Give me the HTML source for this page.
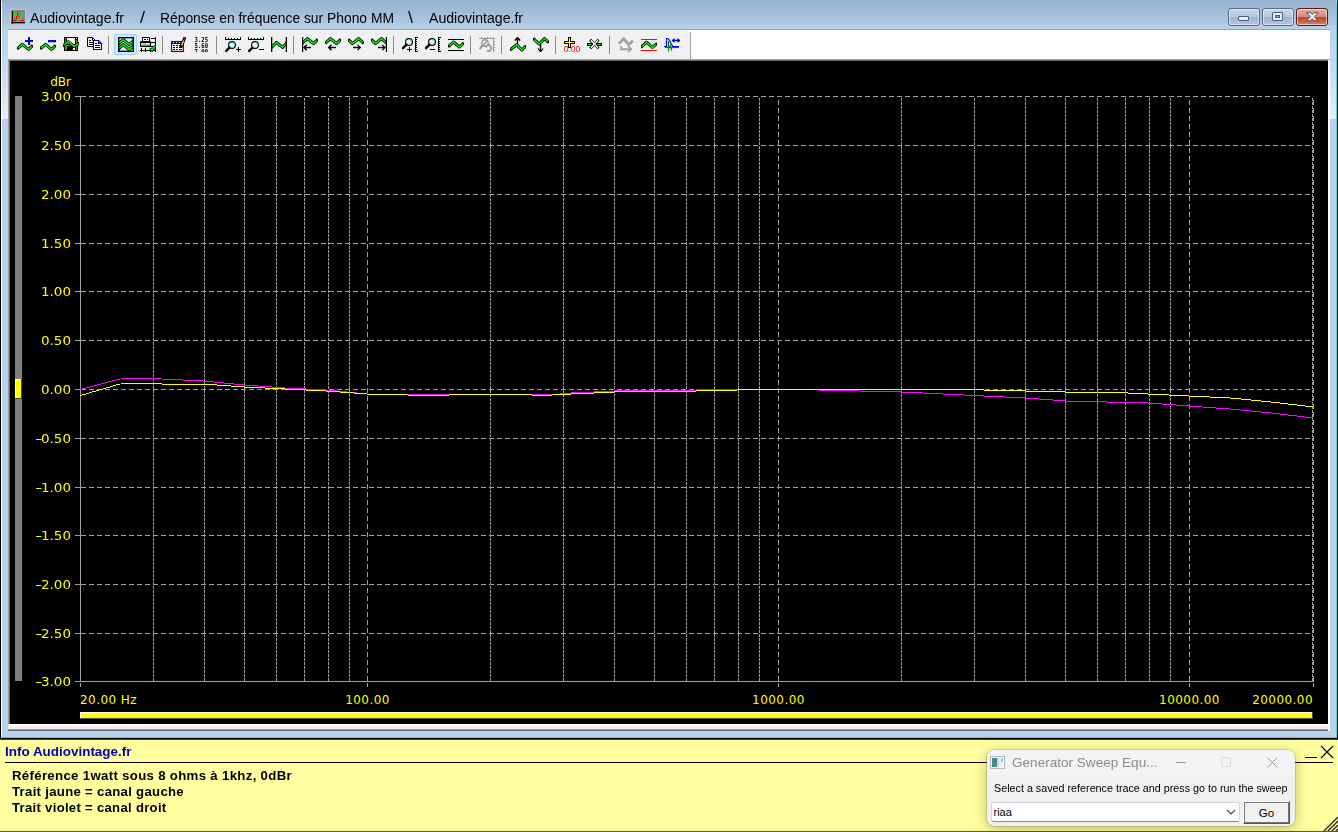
<!DOCTYPE html><html lang="fr"><head><meta charset="utf-8"><title>Audiovintage.fr / Réponse en fréquence sur Phono MM \ Audiovintage.fr</title><style>
*{box-sizing:border-box;margin:0;padding:0}
html,body{width:1338px;height:832px;overflow:hidden;background:#ffffa0;font-family:"Liberation Sans",sans-serif}
.a{position:absolute}
#frame{left:0;top:0;width:1338px;height:739px;background:#b9d1ea}
#tbar{left:2px;top:0;width:1334px;height:29px;background:linear-gradient(#98b3d0,#a3bcd8 45%,#b9d1ea)}
.tt{top:8px;height:20px;line-height:20px;font-size:14px;color:#000;white-space:pre;transform-origin:0 50%}
.cb{top:8px;width:32px;height:18px;border:1px solid #5a6a85;border-radius:3px;box-shadow:inset 0 0 0 1px rgba(255,255,255,.55)}
.yl{font-family:"DejaVu Sans","Liberation Sans",sans-serif;font-size:12px;color:#ffff00;white-space:pre;line-height:14px;height:14px}
#info{left:0;top:740px;width:1338px;height:92px;background:#ffffa0}
.it{left:12px;font-weight:bold;font-size:13px;color:#000;white-space:pre;line-height:16px;height:16px;letter-spacing:.3px;transform-origin:0 50%}
</style></head><body>
<div id="frame" class="a"></div>
<div id="tbar" class="a"></div>
<div class="a" style="left:0;top:0;width:1px;height:739px;background:#000"></div>
<div class="a" style="left:1px;top:2px;width:1px;height:735px;background:#fff"></div>
<div class="a" style="left:1336px;top:2px;width:1px;height:736px;background:#3fd4ee"></div>
<div class="a" style="left:1337px;top:0;width:1px;height:739px;background:#000"></div>
<div class="a" style="left:1px;top:737px;width:1336px;height:1px;background:#3fd4ee"></div>
<div class="a" style="left:0;top:738px;width:1338px;height:1px;background:#000"></div>
<div class="a" style="left:0;top:739px;width:1338px;height:1px;background:#45452c"></div>
<div class="a" style="left:2px;top:30px;width:6px;height:89px;background:linear-gradient(rgba(225,237,249,0),rgba(225,237,249,.35) 40%,rgba(228,239,250,1))"></div>
<div class="a" style="left:1330px;top:30px;width:6px;height:89px;background:linear-gradient(rgba(225,237,249,0),rgba(225,237,249,.35) 40%,rgba(228,239,250,1))"></div>
<svg class="a" style="left:10px;top:9px" width="16" height="16" viewBox="0 0 16 16" shape-rendering="crispEdges"><rect x="0" y="0" width="16" height="16" fill="#c8c6c2"/><rect x="1" y="1" width="14" height="14" fill="#848484"/><rect x="3" y="11" width="3" height="1" fill="#f00"/><rect x="10" y="11" width="4" height="1" fill="#f00"/><rect x="7" y="3" width="1" height="4" fill="#f00"/><rect x="6" y="7" width="1" height="4" fill="#f00"/><rect x="8" y="7" width="1" height="2" fill="#f00"/><rect x="3" y="7" width="1" height="2" fill="#0f0"/><rect x="4" y="5" width="1" height="2" fill="#0f0"/><rect x="5" y="4" width="1" height="1" fill="#0f0"/><rect x="6" y="5" width="1" height="2" fill="#0f0"/><rect x="7" y="7" width="1" height="2" fill="#0f0"/><rect x="8" y="9" width="1" height="2" fill="#0f0"/><rect x="9" y="11" width="1" height="1" fill="#0f0"/><rect x="10" y="9" width="1" height="2" fill="#0f0"/><rect x="11" y="7" width="1" height="2" fill="#0f0"/><rect x="12" y="5" width="1" height="2" fill="#0f0"/><rect x="13" y="4" width="1" height="1" fill="#0f0"/><rect x="2" y="2" width="1" height="13" fill="#000"/><rect x="1" y="13" width="14" height="1" fill="#000"/></svg>
<div class="a tt" id="tt0" style="left:30px;transform:scaleX(1.0064)">Audiovintage.fr</div>
<div class="a tt" id="tt1" style="left:139.5px;font-size:16px;transform:scaleX(1.1228)">/</div>
<div class="a tt" id="tt2" style="left:159.5px;transform:scaleX(0.9890)">Réponse en fréquence sur Phono MM</div>
<div class="a tt" id="tt3" style="left:407.5px;font-size:16px;transform:scaleX(1.1228)">\</div>
<div class="a tt" id="tt4" style="left:429px;transform:scaleX(1.0064)">Audiovintage.fr</div>
<div class="a cb" style="left:1228px;background:linear-gradient(#c3d6ec 0,#b4cae4 48%,#9bb5d4 52%,#b1c8e3 100%)"><div class="a" style="left:9px;top:7px;width:11px;height:5px;background:#eee;border:1px solid #4c5a74;border-radius:1px"></div></div>
<div class="a cb" style="left:1262px;background:linear-gradient(#c3d6ec 0,#b4cae4 48%,#9bb5d4 52%,#b1c8e3 100%)"><div class="a" style="left:9px;top:3px;width:11px;height:9px;background:#eee;border:1px solid #4c5a74;border-radius:1px"><div class="a" style="left:2px;top:2px;width:5px;height:3px;border:1px solid #4c5a74;background:#8fa8cb"></div></div></div>
<div class="a cb" style="left:1296px;border-color:#5b1a20;background:linear-gradient(#e8a99d 0,#d98c7c 48%,#c2452a 52%,#d8806a 100%)"><svg class="a" style="left:9px;top:2px" width="13" height="12" viewBox="0 0 13 12"><path d="M0.8 1.6 L4.6 1.6 L6.3 3.7 L8 1.6 L11.8 1.6 L8.3 5.7 L11.8 9.8 L8 9.8 L6.3 7.7 L4.6 9.8 L0.8 9.8 L4.3 5.7 Z" fill="#f4f4f4" stroke="#55575f" stroke-width="1" stroke-linejoin="round"/></svg></div>
<div class="a" style="left:8px;top:29px;width:1322px;height:1px;background:#a0a0a0"></div>
<div class="a" style="left:8px;top:30px;width:1322px;height:29px;background:#fff"></div>
<div class="a" style="left:8px;top:31px;width:682px;height:28px;background:#f0f0f0"></div>
<div class="a" style="left:690px;top:32px;width:1px;height:27px;background:#a0a0a0"></div>
<svg class="a" style="left:17px;top:37px" width="16" height="16" viewBox="0 0 16 16"><polyline points="1.2,11 5.5,7.4 11.5,12.4 14.8,9.4" fill="none" stroke="#000" stroke-width="3.0" stroke-linecap="square" stroke-linejoin="round"/><polyline points="1.2,11 5.5,7.4 11.5,12.4 14.8,9.4" fill="none" stroke="#00ff00" stroke-width="1.4" stroke-linecap="butt" stroke-linejoin="miter"/><rect x="11" y="0" width="2" height="8" fill="#00f"/><rect x="8" y="3" width="8" height="2" fill="#00f"/><rect x="11" y="7" width="2" height="1" fill="#000"/><rect x="15" y="3" width="1" height="2" fill="#000"/></svg>
<svg class="a" style="left:40px;top:37px" width="16" height="16" viewBox="0 0 16 16"><polyline points="1.2,11 5.5,7.4 11.5,12.4 14.8,9.4" fill="none" stroke="#000" stroke-width="3.0" stroke-linecap="square" stroke-linejoin="round"/><polyline points="1.2,11 5.5,7.4 11.5,12.4 14.8,9.4" fill="none" stroke="#00ff00" stroke-width="1.4" stroke-linecap="butt" stroke-linejoin="miter"/><rect x="8" y="3" width="8" height="2" fill="#00f"/><rect x="15" y="3" width="1" height="2" fill="#000"/><rect x="8" y="4.6" width="8" height="0.6" fill="#000"/></svg>
<svg class="a" style="left:63px;top:37px" width="16" height="16" viewBox="0 0 16 16"><rect x="1" y="0" width="14" height="14" fill="#000"/><rect x="2" y="1" width="1" height="4" fill="#808000"/><rect x="4" y="1" width="8" height="6" fill="#fff"/><rect x="13" y="1" width="1" height="1" fill="#fff"/><rect x="13" y="3" width="1" height="10" fill="#808000"/><rect x="2" y="8" width="2" height="5" fill="#808000"/><rect x="2" y="8" width="6" height="1" fill="#808000"/><rect x="10" y="11" width="2" height="2" fill="#fff"/><polyline points="0.6,8.3 5.4,4.5 11.2,9.5 15.4,6.6" fill="none" stroke="#000" stroke-width="2.8" stroke-linecap="square" stroke-linejoin="round"/><polyline points="0.6,8.3 5.4,4.5 11.2,9.5 15.4,6.6" fill="none" stroke="#00ff00" stroke-width="1.4" stroke-linecap="butt" stroke-linejoin="miter"/></svg>
<svg class="a" style="left:86px;top:37px" width="16" height="16" viewBox="0 0 16 16"><path d="M1.5 .5 H6.5 L9.5 3.5 V9.5 H1.5 Z" fill="#fff" stroke="#000" stroke-width="1"/><path d="M6.5 .5 V3.5 H9.5" fill="none" stroke="#000"/><rect x="3" y="3" width="2" height="1" fill="#000"/><rect x="3" y="5" width="5" height="1" fill="#000"/><rect x="3" y="7" width="5" height="1" fill="#000"/><path d="M7.5 3.5 H12.5 L15.5 6.5 V12.5 H7.5 Z" fill="#fff" stroke="#000080" stroke-width="1.2"/><path d="M12.5 3.5 V6.5 H15.5" fill="none" stroke="#000080" stroke-width="1.2"/><rect x="9" y="6" width="2" height="1" fill="#000"/><rect x="9" y="8" width="5" height="1" fill="#000"/><rect x="9" y="10" width="5" height="1" fill="#000"/></svg>
<div class="a" style="left:108px;top:36px;width:1px;height:18px;background:#8c8c8c"></div>
<div class="a" style="left:114px;top:34px;width:23px;height:21px;background:#cce8ff;border:1px solid #99d1ff;border-radius:2px"></div>
<svg class="a" style="left:118px;top:37px" width="16" height="16" viewBox="0 0 16 16"><rect x=".6" y=".6" width="14.8" height="13.8" fill="#d4ecff" stroke="#000" stroke-width="1.2"/><polyline points="1.2,6.2 5.2,2.6 11.2,7.6 14.8,4.4" fill="none" stroke="#000" stroke-width="3.0" stroke-linecap="square" stroke-linejoin="round"/><polyline points="1.2,6.2 5.2,2.6 11.2,7.6 14.8,4.4" fill="none" stroke="#00ff00" stroke-width="1.4" stroke-linecap="butt" stroke-linejoin="miter"/><polyline points="1.2,11.2 5.2,7.6 11.2,12.6 14.8,9.4" fill="none" stroke="#000" stroke-width="3.0" stroke-linecap="square" stroke-linejoin="round"/><polyline points="1.2,11.2 5.2,7.6 11.2,12.6 14.8,9.4" fill="none" stroke="#00ff00" stroke-width="1.4" stroke-linecap="butt" stroke-linejoin="miter"/><rect x=".6" y=".6" width="14.8" height="13.8" fill="none" stroke="#000" stroke-width="1.2"/></svg>
<svg class="a" style="left:140px;top:37px" width="16" height="16" viewBox="0 0 16 16"><path d="M2.5 .5 H9.5 V4.5 H2.5 Z" fill="#fff" stroke="#000"/><rect x="4" y="2" width="2" height="1" fill="#000"/><rect x="7" y="2" width="1" height="1" fill="#000"/><path d="M.5 4.5 H10.5 V9.5 H.5 Z" fill="#c0c0c0" stroke="#000"/><rect x="1" y="5" width="9" height="1" fill="#000"/><rect x="6" y="6" width="3" height="1" fill="#ff0"/><rect x="1" y="8" width="9" height="1" fill="#808080"/><rect x="11" y="1" width="5" height="1" fill="#000"/><rect x="15" y="0" width="1" height="15" fill="#000"/><rect x="11" y="5" width="5" height="1" fill="#000"/><rect x="11" y="9" width="3" height="1" fill="#000"/><rect x="0" y="13" width="16" height="1" fill="#000"/><rect x="1" y="11" width="1" height="4" fill="#000"/><rect x="5" y="11" width="1" height="4" fill="#000"/><rect x="10" y="11" width="1" height="4" fill="#000"/><path d="M10 11.2 L12 13.2 L15.6 8.6" fill="none" stroke="#000" stroke-width="2.6"/><path d="M10.4 11.4 L12 13 L15.4 8.8" fill="none" stroke="#0f0" stroke-width="1.4"/></svg>
<div class="a" style="left:162px;top:36px;width:1px;height:18px;background:#8c8c8c"></div>
<svg class="a" style="left:170px;top:37px" width="16" height="16" viewBox="0 0 16 16"><rect x="1.6" y="4.6" width="11.8" height="9.8" fill="#fff" stroke="#800000" stroke-width="1.3"/><rect x="2" y="5" width="11" height="2" fill="#000080"/><rect x="3" y="5" width="1" height="1" fill="#fff"/><rect x="6" y="5" width="1" height="1" fill="#fff"/><rect x="9" y="5" width="1" height="1" fill="#fff"/><rect x="3" y="8" width="2" height="1" fill="#000"/><rect x="6" y="8" width="2" height="1" fill="#000"/><rect x="9" y="8" width="3" height="1" fill="#000"/><rect x="3" y="10" width="2" height="1" fill="#000"/><rect x="6" y="10" width="2" height="1" fill="#000"/><rect x="9" y="10" width="3" height="1" fill="#000"/><rect x="3" y="12" width="2" height="1" fill="#000"/><rect x="6" y="12" width="2" height="1" fill="#000"/><rect x="9" y="12" width="3" height="1" fill="#000"/><path d="M14.6 1.2 L11.2 9.4" stroke="#000" stroke-width="3" stroke-linecap="round"/><path d="M13.6 3.6 L11.6 8.4" stroke="#ff0" stroke-width="1.3"/><path d="M14.8 .9 L14.2 2.3" stroke="#a000a0" stroke-width="1.8" stroke-linecap="round"/></svg>
<svg class="a" style="left:194px;top:37px" width="16" height="15" viewBox="0 0 16 15"><g font-family="DejaVu Sans Mono,Liberation Mono,monospace" font-weight="bold" font-size="6.8" fill="#000" style="filter:grayscale(1)"><text x="0.6" y="5" textLength="13.4" lengthAdjust="spacingAndGlyphs">3.25</text><text x="0.6" y="11" textLength="13.4" lengthAdjust="spacingAndGlyphs">5.60</text><text x="0.6" y="17" textLength="13.4" lengthAdjust="spacingAndGlyphs">7.00</text></g></svg>
<div class="a" style="left:216px;top:36px;width:1px;height:18px;background:#8c8c8c"></div>
<svg class="a" style="left:225px;top:37px" width="16" height="16" viewBox="0 0 16 16"><rect x="0" y="2" width="16" height="1" fill="#000"/><rect x="0" y="1" width="1" height="1" fill="#000"/><rect x="3" y="1" width="1" height="1" fill="#000"/><rect x="6" y="1" width="1" height="1" fill="#000"/><rect x="9" y="1" width="1" height="1" fill="#000"/><rect x="12" y="1" width="1" height="1" fill="#000"/><rect x="15" y="1" width="1" height="1" fill="#000"/><rect x="0" y="0" width="1" height="1" fill="#000"/><rect x="15" y="0" width="1" height="1" fill="#000"/><circle cx="7" cy="8" r="3.4" fill="#fbf3f3" stroke="#000" stroke-width="1.15"/><path d="M7.2 5.5 A2.5 2.5 0 0 1 9.5 8.2" stroke="#00e8f0" stroke-width="1.1" fill="none"/><path d="M4.4 8.8 A2.6 2.6 0 0 0 6 10.4" stroke="#00e8f0" stroke-width="1.1" fill="none"/><path d="M4.3 10.9 L1.2 13.8" stroke="#000" stroke-width="2.3" stroke-linecap="square"/><rect x="11" y="12" width="5" height="1" fill="#000"/><rect x="13" y="10" width="1" height="5" fill="#000"/></svg>
<svg class="a" style="left:248px;top:37px" width="16" height="16" viewBox="0 0 16 16"><rect x="0" y="2" width="16" height="1" fill="#000"/><rect x="0" y="1" width="1" height="1" fill="#000"/><rect x="3" y="1" width="1" height="1" fill="#000"/><rect x="6" y="1" width="1" height="1" fill="#000"/><rect x="9" y="1" width="1" height="1" fill="#000"/><rect x="12" y="1" width="1" height="1" fill="#000"/><rect x="15" y="1" width="1" height="1" fill="#000"/><rect x="0" y="0" width="1" height="1" fill="#000"/><rect x="15" y="0" width="1" height="1" fill="#000"/><circle cx="7" cy="8" r="3.4" fill="#fbf3f3" stroke="#000" stroke-width="1.15"/><path d="M7.2 5.5 A2.5 2.5 0 0 1 9.5 8.2" stroke="#00e8f0" stroke-width="1.1" fill="none"/><path d="M4.4 8.8 A2.6 2.6 0 0 0 6 10.4" stroke="#00e8f0" stroke-width="1.1" fill="none"/><path d="M4.3 10.9 L1.2 13.8" stroke="#000" stroke-width="2.3" stroke-linecap="square"/><rect x="11" y="12" width="5" height="1" fill="#000"/></svg>
<svg class="a" style="left:271px;top:37px" width="16" height="16" viewBox="0 0 16 16"><polyline points="1,10 5.5,5.4 11.5,10.4 15,6.6" fill="none" stroke="#000" stroke-width="3.0" stroke-linecap="square" stroke-linejoin="round"/><polyline points="1,10 5.5,5.4 11.5,10.4 15,6.6" fill="none" stroke="#00ff00" stroke-width="1.4" stroke-linecap="butt" stroke-linejoin="miter"/><rect x="0" y="0" width="1.3" height="15" fill="#000"/><rect x="14.7" y="0" width="1.3" height="15" fill="#000"/></svg>
<div class="a" style="left:293px;top:36px;width:1px;height:18px;background:#8c8c8c"></div>
<svg class="a" style="left:302px;top:37px" width="16" height="16" viewBox="0 0 16 16"><polyline points="1.2,5.4 5.5,1.6 11.5,6.6 14.8,3.4" fill="none" stroke="#000" stroke-width="3.0" stroke-linecap="square" stroke-linejoin="round"/><polyline points="1.2,5.4 5.5,1.6 11.5,6.6 14.8,3.4" fill="none" stroke="#00ff00" stroke-width="1.4" stroke-linecap="butt" stroke-linejoin="miter"/><rect x="0" y="0" width="1.2" height="15" fill="#000"/><path d="M1.8 10.5 L9 10.5" stroke="#000" stroke-width="1.4" fill="none"/><path d="M4.8 7.9 L2.1 10.5 L4.8 13.1" stroke="#000" stroke-width="1.5" fill="none"/></svg>
<svg class="a" style="left:325px;top:37px" width="16" height="16" viewBox="0 0 16 16"><polyline points="1.2,5.4 5.5,1.6 11.5,6.6 14.8,3.4" fill="none" stroke="#000" stroke-width="3.0" stroke-linecap="square" stroke-linejoin="round"/><polyline points="1.2,5.4 5.5,1.6 11.5,6.6 14.8,3.4" fill="none" stroke="#00ff00" stroke-width="1.4" stroke-linecap="butt" stroke-linejoin="miter"/><path d="M3.5 10.5 L11 10.5" stroke="#000" stroke-width="1.4" fill="none"/><path d="M6.5 7.9 L3.8 10.5 L6.5 13.1" stroke="#000" stroke-width="1.5" fill="none"/></svg>
<svg class="a" style="left:348px;top:37px" width="16" height="16" viewBox="0 0 16 16"><polyline points="1.1999999999999993,3.4 4.5,6.6 10.5,1.6 14.8,5.4" fill="none" stroke="#000" stroke-width="3.0" stroke-linecap="square" stroke-linejoin="round"/><polyline points="1.1999999999999993,3.4 4.5,6.6 10.5,1.6 14.8,5.4" fill="none" stroke="#00ff00" stroke-width="1.4" stroke-linecap="butt" stroke-linejoin="miter"/><path d="M5 10.5 L12.5 10.5" stroke="#000" stroke-width="1.4" fill="none"/><path d="M9.5 7.9 L12.2 10.5 L9.5 13.1" stroke="#000" stroke-width="1.2" fill="none"/></svg>
<svg class="a" style="left:371px;top:37px" width="16" height="16" viewBox="0 0 16 16"><polyline points="1.1999999999999993,3.4 4.5,6.6 10.5,1.6 14.8,5.4" fill="none" stroke="#000" stroke-width="3.0" stroke-linecap="square" stroke-linejoin="round"/><polyline points="1.1999999999999993,3.4 4.5,6.6 10.5,1.6 14.8,5.4" fill="none" stroke="#00ff00" stroke-width="1.4" stroke-linecap="butt" stroke-linejoin="miter"/><rect x="14.8" y="0" width="1.2" height="15" fill="#000"/><path d="M7 10.5 L14.2 10.5" stroke="#000" stroke-width="1.4" fill="none"/><path d="M11.2 7.9 L13.899999999999999 10.5 L11.2 13.1" stroke="#000" stroke-width="1.2" fill="none"/></svg>
<div class="a" style="left:393px;top:36px;width:1px;height:18px;background:#8c8c8c"></div>
<svg class="a" style="left:402px;top:37px" width="16" height="16" viewBox="0 0 16 16"><rect x="13" y="0" width="1" height="15" fill="#000"/><rect x="14" y="0" width="2" height="1" fill="#000"/><rect x="14" y="2" width="1" height="1" fill="#000"/><rect x="14" y="4" width="1" height="1" fill="#000"/><rect x="14" y="6" width="1" height="1" fill="#000"/><rect x="14" y="8" width="1" height="1" fill="#000"/><rect x="14" y="10" width="1" height="1" fill="#000"/><rect x="14" y="12" width="1" height="1" fill="#000"/><rect x="14" y="14" width="2" height="1" fill="#000"/><circle cx="7" cy="5" r="3.4" fill="#fbf3f3" stroke="#000" stroke-width="1.15"/><path d="M7.2 2.5 A2.5 2.5 0 0 1 9.5 5.2" stroke="#00e8f0" stroke-width="1.1" fill="none"/><path d="M4.4 5.8 A2.6 2.6 0 0 0 6 7.4" stroke="#00e8f0" stroke-width="1.1" fill="none"/><path d="M4.3 7.9 L1 11" stroke="#000" stroke-width="2.3" stroke-linecap="square"/><rect x="5" y="12" width="5" height="1" fill="#000"/><rect x="7" y="10" width="1" height="5" fill="#000"/></svg>
<svg class="a" style="left:425px;top:37px" width="16" height="16" viewBox="0 0 16 16"><rect x="13" y="0" width="1" height="15" fill="#000"/><rect x="14" y="0" width="2" height="1" fill="#000"/><rect x="14" y="2" width="1" height="1" fill="#000"/><rect x="14" y="4" width="1" height="1" fill="#000"/><rect x="14" y="6" width="1" height="1" fill="#000"/><rect x="14" y="8" width="1" height="1" fill="#000"/><rect x="14" y="10" width="1" height="1" fill="#000"/><rect x="14" y="12" width="1" height="1" fill="#000"/><rect x="14" y="14" width="2" height="1" fill="#000"/><circle cx="7" cy="5" r="3.4" fill="#fbf3f3" stroke="#000" stroke-width="1.15"/><path d="M7.2 2.5 A2.5 2.5 0 0 1 9.5 5.2" stroke="#00e8f0" stroke-width="1.1" fill="none"/><path d="M4.4 5.8 A2.6 2.6 0 0 0 6 7.4" stroke="#00e8f0" stroke-width="1.1" fill="none"/><path d="M4.3 7.9 L1 11" stroke="#000" stroke-width="2.3" stroke-linecap="square"/><rect x="5" y="12" width="5" height="1" fill="#000"/></svg>
<svg class="a" style="left:448px;top:37px" width="16" height="16" viewBox="0 0 16 16"><rect x="0" y="2" width="16" height="1" fill="#000"/><rect x="0" y="13" width="16" height="1" fill="#000"/><polyline points="1.2,8.8 5.5,5 11.5,10 14.8,6.8" fill="none" stroke="#000" stroke-width="3.0" stroke-linecap="square" stroke-linejoin="round"/><polyline points="1.2,8.8 5.5,5 11.5,10 14.8,6.8" fill="none" stroke="#00ff00" stroke-width="1.4" stroke-linecap="butt" stroke-linejoin="miter"/></svg>
<div class="a" style="left:470px;top:36px;width:1px;height:18px;background:#8c8c8c"></div>
<svg class="a" style="left:479px;top:37px" width="16" height="16" viewBox="0 0 16 16"><rect x="0" y="1" width="16" height="1" fill="#9c9c9c"/><rect x="2" y="0" width="1" height="1" fill="#9c9c9c"/><rect x="5" y="0" width="1" height="1" fill="#9c9c9c"/><rect x="8" y="0" width="1" height="1" fill="#9c9c9c"/><rect x="11" y="0" width="1" height="1" fill="#9c9c9c"/><rect x="14" y="0" width="1" height="1" fill="#9c9c9c"/><rect x="14" y="1" width="1" height="14" fill="#9c9c9c"/><rect x="15" y="4" width="1" height="1" fill="#9c9c9c"/><rect x="15" y="7" width="1" height="1" fill="#9c9c9c"/><rect x="15" y="10" width="1" height="1" fill="#9c9c9c"/><rect x="15" y="13" width="1" height="1" fill="#9c9c9c"/><circle cx="6" cy="6" r="3.2" fill="none" stroke="#9c9c9c" stroke-width="1.4"/><path d="M3.8 8.4 L8.2 3.8" stroke="#9c9c9c" stroke-width="1.4"/><path d="M3.2 8.6 L.6 12.2" stroke="#9c9c9c" stroke-width="2.2"/><path d="M3 9 H7.5 V11" stroke="#9c9c9c" stroke-width="1.2" fill="none"/><path d="M8.5 7.2 L11 8.6 Q13 10.5 12 12.6 L10.5 14 H8" stroke="#9c9c9c" stroke-width="1.9" fill="none"/></svg>
<div class="a" style="left:501px;top:36px;width:1px;height:18px;background:#8c8c8c"></div>
<svg class="a" style="left:510px;top:37px" width="16" height="16" viewBox="0 0 16 16"><path d="M7.5 0.4 L7.5 8" stroke="#000" stroke-width="1.4" fill="none"/><path d="M4.9 3.4 L7.5 0.7 L10.1 3.4" stroke="#000" stroke-width="1.5" fill="none"/><polyline points="1,12.2 6.8,7.7 11.8,13 15,9.8" fill="none" stroke="#000" stroke-width="3.0" stroke-linecap="square" stroke-linejoin="round"/><polyline points="1,12.2 6.8,7.7 11.8,13 15,9.8" fill="none" stroke="#00ff00" stroke-width="1.4" stroke-linecap="butt" stroke-linejoin="miter"/></svg>
<svg class="a" style="left:533px;top:37px" width="16" height="16" viewBox="0 0 16 16"><path d="M7.5 7 L7.5 14.6" stroke="#000" stroke-width="1.4" fill="none"/><path d="M4.9 11.6 L7.5 14.299999999999999 L10.1 11.6" stroke="#000" stroke-width="1.2" fill="none"/><polyline points="1.2,2.4 6,7 11.5,1.6 14.8,4.6" fill="none" stroke="#000" stroke-width="3.0" stroke-linecap="square" stroke-linejoin="round"/><polyline points="1.2,2.4 6,7 11.5,1.6 14.8,4.6" fill="none" stroke="#00ff00" stroke-width="1.4" stroke-linecap="butt" stroke-linejoin="miter"/></svg>
<div class="a" style="left:555px;top:36px;width:1px;height:18px;background:#8c8c8c"></div>
<svg class="a" style="left:564px;top:37px" width="17" height="16" viewBox="0 0 17 16"><rect x="4" y="0" width="3" height="11" fill="#000"/><rect x="0" y="4" width="11" height="3" fill="#000"/><rect x="5" y="1" width="1" height="9" fill="#ff0"/><rect x="1" y="5" width="9" height="1" fill="#ff0"/><text x="-0.3" y="15" font-family="Liberation Sans,sans-serif" font-size="8.4" fill="#f00" textLength="16.6" lengthAdjust="spacingAndGlyphs" style="filter:saturate(1)">0.00</text></svg>
<svg class="a" style="left:587px;top:37px" width="16" height="16" viewBox="0 0 16 16"><rect x="0" y="6" width="5.5" height="3" fill="#000"/><rect x="9.5" y="6" width="5.5" height="3" fill="#000"/><path d="M4.4 5 L7 7.5 L4.4 10 Z M10.4 5 L7.8 7.5 L10.4 10 Z" fill="#000"/><rect x="1" y="7" width="3.6" height="1" fill="#0f0"/><rect x="10.4" y="7" width="3.6" height="1" fill="#0f0"/><path d="M3.2 2.6 L11.6 11.4 M11.6 2.6 L3.2 11.4" stroke="#000" stroke-width="2.6" stroke-linecap="butt"/><path d="M3.9 3.3 L10.9 10.7 M10.9 3.3 L3.9 10.7" stroke="#fff" stroke-width="1.3" stroke-linecap="butt"/></svg>
<div class="a" style="left:609px;top:36px;width:1px;height:18px;background:#8c8c8c"></div>
<svg class="a" style="left:618px;top:37px" width="16" height="16" viewBox="0 0 16 16"><polyline points="0.8,6.6 5.7,1.8 10.7,7.6 15,3.8" fill="none" stroke="#a0a0a0" stroke-width="2.8" stroke-linejoin="miter"/><path d="M3.2 9 V12.3 H12" fill="none" stroke="#a0a0a0" stroke-width="2"/><path d="M10.2 9.4 L13.2 12.3 L10.2 15.2" fill="none" stroke="#a0a0a0" stroke-width="1.8"/></svg>
<svg class="a" style="left:641px;top:37px" width="16" height="16" viewBox="0 0 16 16"><rect x="0" y="2" width="16" height="1" fill="#f00"/><rect x="0" y="13" width="16" height="1" fill="#f00"/><polyline points="1,9.4 5.5,5.2 11.5,10.5 15,7.4" fill="none" stroke="#000" stroke-width="3.0" stroke-linecap="square" stroke-linejoin="round"/><polyline points="1,9.4 5.5,5.2 11.5,10.5 15,7.4" fill="none" stroke="#00ff00" stroke-width="1.4" stroke-linecap="butt" stroke-linejoin="miter"/></svg>
<svg class="a" style="left:664px;top:37px" width="17" height="16" viewBox="0 0 17 16"><path d="M1 10.5 H15" stroke="#008000" stroke-width="1.1"/><path d="M4.5 4 V14.5 M5.5 10.5 L6.3 8.4 L7.3 12.4 L8.2 9.6 L9 11" stroke="#008000" stroke-width="1.1" fill="none"/><path d="M0 9.5 H2.5 V1.5 H4 Q5.5 2.5 7 6.5 L9 9.5 H15" fill="none" stroke="#00f" stroke-width="1.2"/><path d="M9 3.5 H15.6" stroke="#000080" stroke-width="1.5"/><path d="M10.4 1 L7.6 3.5 L10.4 6 Z M13.6 1 L16.4 3.5 L13.6 6 Z" fill="#000080"/></svg>
<div class="a" style="left:8px;top:59px;width:1322px;height:672px;background:#f0f0f0"></div>
<div class="a" style="left:8px;top:59px;width:1322px;height:1px;background:#a0a0a0"></div>
<div class="a" style="left:8px;top:60px;width:1320px;height:1px;background:#696969"></div>
<div class="a" style="left:8px;top:59px;width:1px;height:666px;background:#a0a0a0"></div>
<div class="a" style="left:9px;top:60px;width:1px;height:664px;background:#696969"></div>
<div class="a" style="left:9px;top:724px;width:1321px;height:2px;background:#fff"></div>
<div class="a" style="left:8px;top:729px;width:1322px;height:1px;background:#a0a0a0"></div>
<div class="a" style="left:8px;top:730px;width:1322px;height:1px;background:#696969"></div>
<div class="a" style="left:1328px;top:60px;width:2px;height:671px;background:#fff"></div>
<div class="a" style="left:10px;top:61px;width:1318px;height:663px;background:#000"></div>
<svg class="a" style="left:10px;top:61px" width="1318" height="663" viewBox="0 0 1318 663" shape-rendering="crispEdges">
<rect x="5" y="35" width="7" height="585" fill="#808080"/>
<rect x="5" y="318" width="7" height="20" fill="#404058"/>
<rect x="5" y="318" width="6" height="19" fill="#fff"/>
<rect x="6" y="319" width="5" height="18" fill="#ff0"/>
<line x1="65" y1="35.5" x2="71" y2="35.5" stroke="#a0a0a0"/>
<line x1="71" y1="35.5" x2="1302" y2="35.5" stroke="#a0a0a0" stroke-dasharray="5 3"/>
<line x1="65" y1="84.5" x2="71" y2="84.5" stroke="#a0a0a0"/>
<line x1="71" y1="84.5" x2="1302" y2="84.5" stroke="#a0a0a0" stroke-dasharray="5 3"/>
<line x1="65" y1="133.5" x2="71" y2="133.5" stroke="#a0a0a0"/>
<line x1="71" y1="133.5" x2="1302" y2="133.5" stroke="#a0a0a0" stroke-dasharray="5 3"/>
<line x1="65" y1="182.5" x2="71" y2="182.5" stroke="#a0a0a0"/>
<line x1="71" y1="182.5" x2="1302" y2="182.5" stroke="#a0a0a0" stroke-dasharray="5 3"/>
<line x1="65" y1="230.5" x2="71" y2="230.5" stroke="#a0a0a0"/>
<line x1="71" y1="230.5" x2="1302" y2="230.5" stroke="#a0a0a0" stroke-dasharray="5 3"/>
<line x1="65" y1="279.5" x2="71" y2="279.5" stroke="#a0a0a0"/>
<line x1="71" y1="279.5" x2="1302" y2="279.5" stroke="#a0a0a0" stroke-dasharray="5 3"/>
<line x1="65" y1="328.5" x2="71" y2="328.5" stroke="#a0a0a0"/>
<line x1="71" y1="328.5" x2="1302" y2="328.5" stroke="#a0a0a0" stroke-dasharray="5 3"/>
<line x1="65" y1="377.5" x2="71" y2="377.5" stroke="#a0a0a0"/>
<line x1="71" y1="377.5" x2="1302" y2="377.5" stroke="#a0a0a0" stroke-dasharray="5 3"/>
<line x1="65" y1="426.5" x2="71" y2="426.5" stroke="#a0a0a0"/>
<line x1="71" y1="426.5" x2="1302" y2="426.5" stroke="#a0a0a0" stroke-dasharray="5 3"/>
<line x1="65" y1="474.5" x2="71" y2="474.5" stroke="#a0a0a0"/>
<line x1="71" y1="474.5" x2="1302" y2="474.5" stroke="#a0a0a0" stroke-dasharray="5 3"/>
<line x1="65" y1="523.5" x2="71" y2="523.5" stroke="#a0a0a0"/>
<line x1="71" y1="523.5" x2="1302" y2="523.5" stroke="#a0a0a0" stroke-dasharray="5 3"/>
<line x1="65" y1="572.5" x2="71" y2="572.5" stroke="#a0a0a0"/>
<line x1="71" y1="572.5" x2="1302" y2="572.5" stroke="#a0a0a0" stroke-dasharray="5 3"/>
<line x1="65" y1="620.5" x2="71" y2="620.5" stroke="#a0a0a0"/>
<line x1="70.5" y1="35" x2="70.5" y2="621" stroke="#a0a0a0"/>
<rect x="70" y="622" width="1" height="4" fill="#a0a0a0"/>
<line x1="65" y1="620.5" x2="1304" y2="620.5" stroke="#a0a0a0"/>
<line x1="143.5" y1="37" x2="143.5" y2="620" stroke="#a0a0a0" stroke-dasharray="3 1"/>
<line x1="194.5" y1="37" x2="194.5" y2="620" stroke="#a0a0a0" stroke-dasharray="3 1"/>
<line x1="234.5" y1="37" x2="234.5" y2="620" stroke="#a0a0a0" stroke-dasharray="3 1"/>
<line x1="266.5" y1="37" x2="266.5" y2="620" stroke="#a0a0a0" stroke-dasharray="3 1"/>
<line x1="294.5" y1="37" x2="294.5" y2="620" stroke="#a0a0a0" stroke-dasharray="3 1"/>
<line x1="318.5" y1="37" x2="318.5" y2="620" stroke="#a0a0a0" stroke-dasharray="3 1"/>
<line x1="339.5" y1="37" x2="339.5" y2="620" stroke="#a0a0a0" stroke-dasharray="3 1"/>
<line x1="357.5" y1="39" x2="357.5" y2="620" stroke="#a0a0a0" stroke-dasharray="5 3"/>
<rect x="357.0" y="622" width="1" height="4" fill="#a0a0a0"/>
<line x1="480.5" y1="37" x2="480.5" y2="620" stroke="#a0a0a0" stroke-dasharray="3 1"/>
<line x1="553.5" y1="37" x2="553.5" y2="620" stroke="#a0a0a0" stroke-dasharray="3 1"/>
<line x1="604.5" y1="37" x2="604.5" y2="620" stroke="#a0a0a0" stroke-dasharray="3 1"/>
<line x1="644.5" y1="37" x2="644.5" y2="620" stroke="#a0a0a0" stroke-dasharray="3 1"/>
<line x1="676.5" y1="37" x2="676.5" y2="620" stroke="#a0a0a0" stroke-dasharray="3 1"/>
<line x1="704.5" y1="37" x2="704.5" y2="620" stroke="#a0a0a0" stroke-dasharray="3 1"/>
<line x1="728.5" y1="37" x2="728.5" y2="620" stroke="#a0a0a0" stroke-dasharray="3 1"/>
<line x1="749.5" y1="37" x2="749.5" y2="620" stroke="#a0a0a0" stroke-dasharray="3 1"/>
<line x1="768.5" y1="39" x2="768.5" y2="620" stroke="#a0a0a0" stroke-dasharray="5 3"/>
<rect x="768.0" y="622" width="1" height="4" fill="#a0a0a0"/>
<line x1="891.5" y1="37" x2="891.5" y2="620" stroke="#a0a0a0" stroke-dasharray="3 1"/>
<line x1="964.5" y1="37" x2="964.5" y2="620" stroke="#a0a0a0" stroke-dasharray="3 1"/>
<line x1="1015.5" y1="37" x2="1015.5" y2="620" stroke="#a0a0a0" stroke-dasharray="3 1"/>
<line x1="1055.5" y1="37" x2="1055.5" y2="620" stroke="#a0a0a0" stroke-dasharray="3 1"/>
<line x1="1087.5" y1="37" x2="1087.5" y2="620" stroke="#a0a0a0" stroke-dasharray="3 1"/>
<line x1="1115.5" y1="37" x2="1115.5" y2="620" stroke="#a0a0a0" stroke-dasharray="3 1"/>
<line x1="1139.5" y1="37" x2="1139.5" y2="620" stroke="#a0a0a0" stroke-dasharray="3 1"/>
<line x1="1160.5" y1="37" x2="1160.5" y2="620" stroke="#a0a0a0" stroke-dasharray="3 1"/>
<line x1="1179.5" y1="39" x2="1179.5" y2="620" stroke="#a0a0a0" stroke-dasharray="5 3"/>
<rect x="1179.0" y="622" width="1" height="4" fill="#a0a0a0"/>
<line x1="1302.5" y1="37" x2="1302.5" y2="620" stroke="#a0a0a0" stroke-dasharray="3 1"/>
<line x1="1303.5" y1="39" x2="1303.5" y2="620" stroke="#a0a0a0" stroke-dasharray="5 3"/>
<rect x="1303.0" y="622" width="1" height="4" fill="#a0a0a0"/>
<rect x="70" y="328" width="2" height="1" fill="#ff00ff"/>
<rect x="72" y="327" width="4" height="1" fill="#ff00ff"/>
<rect x="76" y="326" width="4" height="1" fill="#ff00ff"/>
<rect x="80" y="325" width="4" height="1" fill="#ff00ff"/>
<rect x="84" y="324" width="3" height="1" fill="#ff00ff"/>
<rect x="87" y="323" width="4" height="1" fill="#ff00ff"/>
<rect x="91" y="322" width="4" height="1" fill="#ff00ff"/>
<rect x="95" y="321" width="3" height="1" fill="#ff00ff"/>
<rect x="98" y="320" width="4" height="1" fill="#ff00ff"/>
<rect x="102" y="319" width="4" height="1" fill="#ff00ff"/>
<rect x="106" y="318" width="4" height="1" fill="#ff00ff"/>
<rect x="111" y="317" width="41" height="1" fill="#ff00ff"/>
<rect x="152" y="318" width="21" height="1" fill="#ff00ff"/>
<rect x="173" y="319" width="20" height="1" fill="#ff00ff"/>
<rect x="193" y="320" width="11" height="1" fill="#ff00ff"/>
<rect x="204" y="321" width="10" height="1" fill="#ff00ff"/>
<rect x="214" y="322" width="10" height="1" fill="#ff00ff"/>
<rect x="224" y="323" width="10" height="1" fill="#ff00ff"/>
<rect x="234" y="324" width="14" height="1" fill="#ff00ff"/>
<rect x="248" y="325" width="14" height="1" fill="#ff00ff"/>
<rect x="262" y="326" width="13" height="1" fill="#ff00ff"/>
<rect x="275" y="327" width="21" height="1" fill="#ff00ff"/>
<rect x="296" y="328" width="20" height="1" fill="#ff00ff"/>
<rect x="316" y="329" width="11" height="1" fill="#ff00ff"/>
<rect x="327" y="330" width="10" height="1" fill="#ff00ff"/>
<rect x="337" y="331" width="10" height="1" fill="#ff00ff"/>
<rect x="347" y="332" width="10" height="1" fill="#ff00ff"/>
<rect x="357" y="333" width="193" height="1" fill="#ff00ff"/>
<rect x="550" y="332" width="11" height="1" fill="#ff00ff"/>
<rect x="561" y="331" width="23" height="1" fill="#ff00ff"/>
<rect x="584" y="330" width="20" height="1" fill="#ff00ff"/>
<rect x="604" y="329" width="82" height="1" fill="#ff00ff"/>
<rect x="686" y="328" width="123" height="1" fill="#ff00ff"/>
<rect x="809" y="329" width="41" height="1" fill="#ff00ff"/>
<rect x="850" y="330" width="42" height="1" fill="#ff00ff"/>
<rect x="892" y="331" width="21" height="1" fill="#ff00ff"/>
<rect x="913" y="332" width="20" height="1" fill="#ff00ff"/>
<rect x="933" y="333" width="21" height="1" fill="#ff00ff"/>
<rect x="954" y="334" width="20" height="1" fill="#ff00ff"/>
<rect x="974" y="335" width="21" height="1" fill="#ff00ff"/>
<rect x="995" y="336" width="21" height="1" fill="#ff00ff"/>
<rect x="1016" y="337" width="13" height="1" fill="#ff00ff"/>
<rect x="1029" y="338" width="14" height="1" fill="#ff00ff"/>
<rect x="1043" y="339" width="12" height="1" fill="#ff00ff"/>
<rect x="1055" y="340" width="42" height="1" fill="#ff00ff"/>
<rect x="1097" y="341" width="41" height="1" fill="#ff00ff"/>
<rect x="1138" y="342" width="14" height="1" fill="#ff00ff"/>
<rect x="1152" y="343" width="14" height="1" fill="#ff00ff"/>
<rect x="1166" y="344" width="13" height="1" fill="#ff00ff"/>
<rect x="1179" y="345" width="14" height="1" fill="#ff00ff"/>
<rect x="1193" y="346" width="13" height="1" fill="#ff00ff"/>
<rect x="1206" y="347" width="14" height="1" fill="#ff00ff"/>
<rect x="1220" y="348" width="11" height="1" fill="#ff00ff"/>
<rect x="1231" y="349" width="10" height="1" fill="#ff00ff"/>
<rect x="1241" y="350" width="10" height="1" fill="#ff00ff"/>
<rect x="1251" y="351" width="10" height="1" fill="#ff00ff"/>
<rect x="1261" y="352" width="9" height="1" fill="#ff00ff"/>
<rect x="1270" y="353" width="8" height="1" fill="#ff00ff"/>
<rect x="1278" y="354" width="9" height="1" fill="#ff00ff"/>
<rect x="1287" y="355" width="8" height="1" fill="#ff00ff"/>
<rect x="1295" y="356" width="8" height="1" fill="#ff00ff"/>
<rect x="70" y="334" width="2" height="1" fill="#ffff00"/>
<rect x="72" y="333" width="4" height="1" fill="#ffff00"/>
<rect x="76" y="332" width="3" height="1" fill="#ffff00"/>
<rect x="79" y="331" width="3" height="1" fill="#ffff00"/>
<rect x="82" y="330" width="4" height="1" fill="#ffff00"/>
<rect x="86" y="329" width="3" height="1" fill="#ffff00"/>
<rect x="89" y="328" width="4" height="1" fill="#ffff00"/>
<rect x="93" y="327" width="3" height="1" fill="#ffff00"/>
<rect x="96" y="326" width="4" height="1" fill="#ffff00"/>
<rect x="100" y="325" width="3" height="1" fill="#ffff00"/>
<rect x="103" y="324" width="3" height="1" fill="#ffff00"/>
<rect x="106" y="323" width="4" height="1" fill="#ffff00"/>
<rect x="111" y="322" width="41" height="1" fill="#ffff00"/>
<rect x="152" y="323" width="55" height="1" fill="#ffff00"/>
<rect x="207" y="324" width="14" height="1" fill="#ffff00"/>
<rect x="221" y="325" width="13" height="1" fill="#ffff00"/>
<rect x="234" y="326" width="21" height="1" fill="#ffff00"/>
<rect x="255" y="327" width="20" height="1" fill="#ffff00"/>
<rect x="275" y="328" width="21" height="1" fill="#ffff00"/>
<rect x="296" y="329" width="20" height="1" fill="#ffff00"/>
<rect x="316" y="330" width="14" height="1" fill="#ffff00"/>
<rect x="330" y="331" width="14" height="1" fill="#ffff00"/>
<rect x="344" y="332" width="13" height="1" fill="#ffff00"/>
<rect x="357" y="333" width="41" height="1" fill="#ffff00"/>
<rect x="398" y="334" width="41" height="1" fill="#ffff00"/>
<rect x="439" y="333" width="83" height="1" fill="#ffff00"/>
<rect x="522" y="334" width="20" height="1" fill="#ffff00"/>
<rect x="542" y="333" width="19" height="1" fill="#ffff00"/>
<rect x="561" y="332" width="23" height="1" fill="#ffff00"/>
<rect x="584" y="331" width="20" height="1" fill="#ffff00"/>
<rect x="604" y="330" width="82" height="1" fill="#ffff00"/>
<rect x="686" y="329" width="41" height="1" fill="#ffff00"/>
<rect x="727" y="328" width="247" height="1" fill="#ffff00"/>
<rect x="974" y="329" width="42" height="1" fill="#ffff00"/>
<rect x="1016" y="330" width="39" height="1" fill="#ffff00"/>
<rect x="1055" y="331" width="63" height="1" fill="#ffff00"/>
<rect x="1118" y="332" width="20" height="1" fill="#ffff00"/>
<rect x="1138" y="333" width="21" height="1" fill="#ffff00"/>
<rect x="1159" y="334" width="20" height="1" fill="#ffff00"/>
<rect x="1179" y="335" width="21" height="1" fill="#ffff00"/>
<rect x="1200" y="336" width="20" height="1" fill="#ffff00"/>
<rect x="1220" y="337" width="11" height="1" fill="#ffff00"/>
<rect x="1231" y="338" width="10" height="1" fill="#ffff00"/>
<rect x="1241" y="339" width="10" height="1" fill="#ffff00"/>
<rect x="1251" y="340" width="10" height="1" fill="#ffff00"/>
<rect x="1261" y="341" width="9" height="1" fill="#ffff00"/>
<rect x="1270" y="342" width="8" height="1" fill="#ffff00"/>
<rect x="1278" y="343" width="9" height="1" fill="#ffff00"/>
<rect x="1287" y="344" width="8" height="1" fill="#ffff00"/>
<rect x="1295" y="345" width="8" height="1" fill="#ffff00"/>
<rect x="70" y="651" width="1233" height="7" fill="#505068"/>
<rect x="70" y="651" width="1232" height="6" fill="#fff"/>
<rect x="71" y="652" width="1231" height="5" fill="#ff0"/>
</svg>
<div class="a yl" style="left:30px;top:75px;width:41px;text-align:right">dBr</div>
<div class="a yl" style="left:20.7px;top:90px;width:50px;text-align:right;transform:scaleX(1.125);transform-origin:100% 50%">3.00</div>
<div class="a yl" style="left:20.7px;top:139px;width:50px;text-align:right;transform:scaleX(1.125);transform-origin:100% 50%">2.50</div>
<div class="a yl" style="left:20.7px;top:188px;width:50px;text-align:right;transform:scaleX(1.125);transform-origin:100% 50%">2.00</div>
<div class="a yl" style="left:20.7px;top:237px;width:50px;text-align:right;transform:scaleX(1.125);transform-origin:100% 50%">1.50</div>
<div class="a yl" style="left:20.7px;top:285px;width:50px;text-align:right;transform:scaleX(1.125);transform-origin:100% 50%">1.00</div>
<div class="a yl" style="left:20.7px;top:334px;width:50px;text-align:right;transform:scaleX(1.125);transform-origin:100% 50%">0.50</div>
<div class="a yl" style="left:20.7px;top:383px;width:50px;text-align:right;transform:scaleX(1.125);transform-origin:100% 50%">0.00</div>
<div class="a yl" style="left:20.7px;top:432px;width:50px;text-align:right;transform:scaleX(1.125);transform-origin:100% 50%"><span style="display:inline-block;transform:scaleX(1.5);margin-right:-.15px">-</span>0.50</div>
<div class="a yl" style="left:20.7px;top:481px;width:50px;text-align:right;transform:scaleX(1.125);transform-origin:100% 50%"><span style="display:inline-block;transform:scaleX(1.5);margin-right:-.15px">-</span>1.00</div>
<div class="a yl" style="left:20.7px;top:529px;width:50px;text-align:right;transform:scaleX(1.125);transform-origin:100% 50%"><span style="display:inline-block;transform:scaleX(1.5);margin-right:-.15px">-</span>1.50</div>
<div class="a yl" style="left:20.7px;top:578px;width:50px;text-align:right;transform:scaleX(1.125);transform-origin:100% 50%"><span style="display:inline-block;transform:scaleX(1.5);margin-right:-.15px">-</span>2.00</div>
<div class="a yl" style="left:20.7px;top:627px;width:50px;text-align:right;transform:scaleX(1.125);transform-origin:100% 50%"><span style="display:inline-block;transform:scaleX(1.5);margin-right:-.15px">-</span>2.50</div>
<div class="a yl" style="left:20.7px;top:675px;width:50px;text-align:right;transform:scaleX(1.125);transform-origin:100% 50%"><span style="display:inline-block;transform:scaleX(1.5);margin-right:-.15px">-</span>3.00</div>
<div class="a yl" style="left:80px;top:693px;letter-spacing:.45px">20.00 Hz</div>
<div class="a yl" style="left:317.5px;top:693px;width:100px;text-align:center;letter-spacing:.45px">100.00</div>
<div class="a yl" style="left:728.5px;top:693px;width:100px;text-align:center;letter-spacing:.45px">1000.00</div>
<div class="a yl" style="left:1139.5px;top:693px;width:100px;text-align:center;letter-spacing:.45px">10000.00</div>
<div class="a yl" style="left:1213px;top:693px;width:100px;text-align:right;letter-spacing:.45px">20000.00</div>
<div id="info" class="a"></div>
<div class="a" style="left:4.5px;top:744px;font-weight:bold;font-size:13.3px;color:#0000c0;line-height:16px;white-space:pre;transform-origin:0 50%;transform:scaleX(1.0112)" id="ihead">Info Audiovintage.fr</div>
<div class="a" style="left:5px;top:762px;width:1328px;height:1px;background:#000"></div>
<div class="a it" id="it0" style="top:768px;transform:scaleX(1.0182)">Référence 1watt sous 8 ohms à 1khz, 0dBr</div>
<div class="a it" id="it1" style="top:784px;transform:scaleX(1.0117)">Trait jaune = canal gauche</div>
<div class="a it" id="it2" style="top:800px;transform:scaleX(1.0073)">Trait violet = canal droit</div>
<div class="a" style="left:1305px;top:757px;width:12px;height:1px;background:#000"></div>
<svg class="a" style="left:1320px;top:745px" width="14" height="14" viewBox="0 0 14 14"><path d="M1 1 L13 13 M13 1 L1 13" stroke="#000" stroke-width="1.1"/></svg>
<svg class="a" style="left:1322px;top:816px" width="16" height="16" viewBox="0 0 16 16"><path d="M1 16 L16 1 M5 16 L16 5 M9 16 L16 9 M13 16 L16 13" stroke="#222" stroke-width="1.3"/></svg>
<div class="a" style="left:0;top:831px;width:1338px;height:1px;background:#56565e"></div>
<div class="a" style="left:987px;top:750px;width:308px;height:76px;border-radius:8px;background:#f0f0f0;box-shadow:0 0 0 1px rgba(120,120,80,.25),0 3px 14px rgba(70,70,0,.38);overflow:hidden;font-family:'Liberation Sans',sans-serif">
<div class="a" style="left:0;top:0;width:309px;height:25px;background:#f3f3f3"></div>
<svg class="a" style="left:3px;top:5.5px" width="15" height="13" viewBox="0 0 15 13"><rect x=".5" y=".5" width="14" height="12" fill="#fdfdfd" stroke="#b4b8bc"/><rect x="2" y="2" width="5" height="9" fill="#3f9080"/><rect x="2" y="2" width="5" height="4" fill="#3a7f9a" opacity=".5"/><rect x="7" y="2" width="2.5" height="9" fill="#cdd6da"/><rect x="9.5" y="2" width="3.5" height="9" fill="#eef2f4"/><rect x="11.5" y="2.5" width="1.2" height="3" fill="#4a86c5"/></svg>
<div class="a" id="dt" style="left:25px;top:3.5px;font-size:13.3px;line-height:18px;color:#8c8c8c;white-space:pre;transform-origin:0 50%;transform:scaleX(1.0199)">Generator Sweep Equ...</div>
<div class="a" style="left:189px;top:12px;width:10px;height:1px;background:#9a9a9a"></div>
<div class="a" style="left:234px;top:7px;width:10px;height:10px;border:1px solid #dadada;border-radius:1px"></div>
<svg class="a" style="left:279.5px;top:7px" width="11" height="11" viewBox="0 0 11 11"><path d="M.5 .5 L10.5 10.5 M10.5 .5 L.5 10.5" stroke="#9a9a9a" stroke-width="1"/></svg>
<div class="a" id="dm" style="left:6.5px;top:30px;font-size:11px;line-height:16px;color:#000;white-space:pre;transform-origin:0 50%;transform:scaleX(0.9776)">Select a saved reference trace and press go to run the sweep</div>
<div class="a" style="left:4px;top:52px;width:249px;height:20px;background:#fff;border:1px solid #d4d4d4;border-bottom-color:#8a8a8a;border-radius:3px"></div>
<div class="a" style="left:6.5px;top:54px;font-size:11px;line-height:16px;color:#000">riaa</div>
<svg class="a" style="left:239px;top:59px" width="10" height="6" viewBox="0 0 10 6"><path d="M1 1 L5 5 L9 1" fill="none" stroke="#444" stroke-width="1.1"/></svg>
<div class="a" style="left:256px;top:51px;width:47px;height:23px;background:#f0f0f0;border:1px solid #fff;border-right-color:#555;border-bottom-color:#555;box-shadow:0 0 0 1px #777 inset;text-align:center;font-size:11.5px;line-height:21px;padding-top:1px;color:#000">Go</div>
</div>
</body></html>
